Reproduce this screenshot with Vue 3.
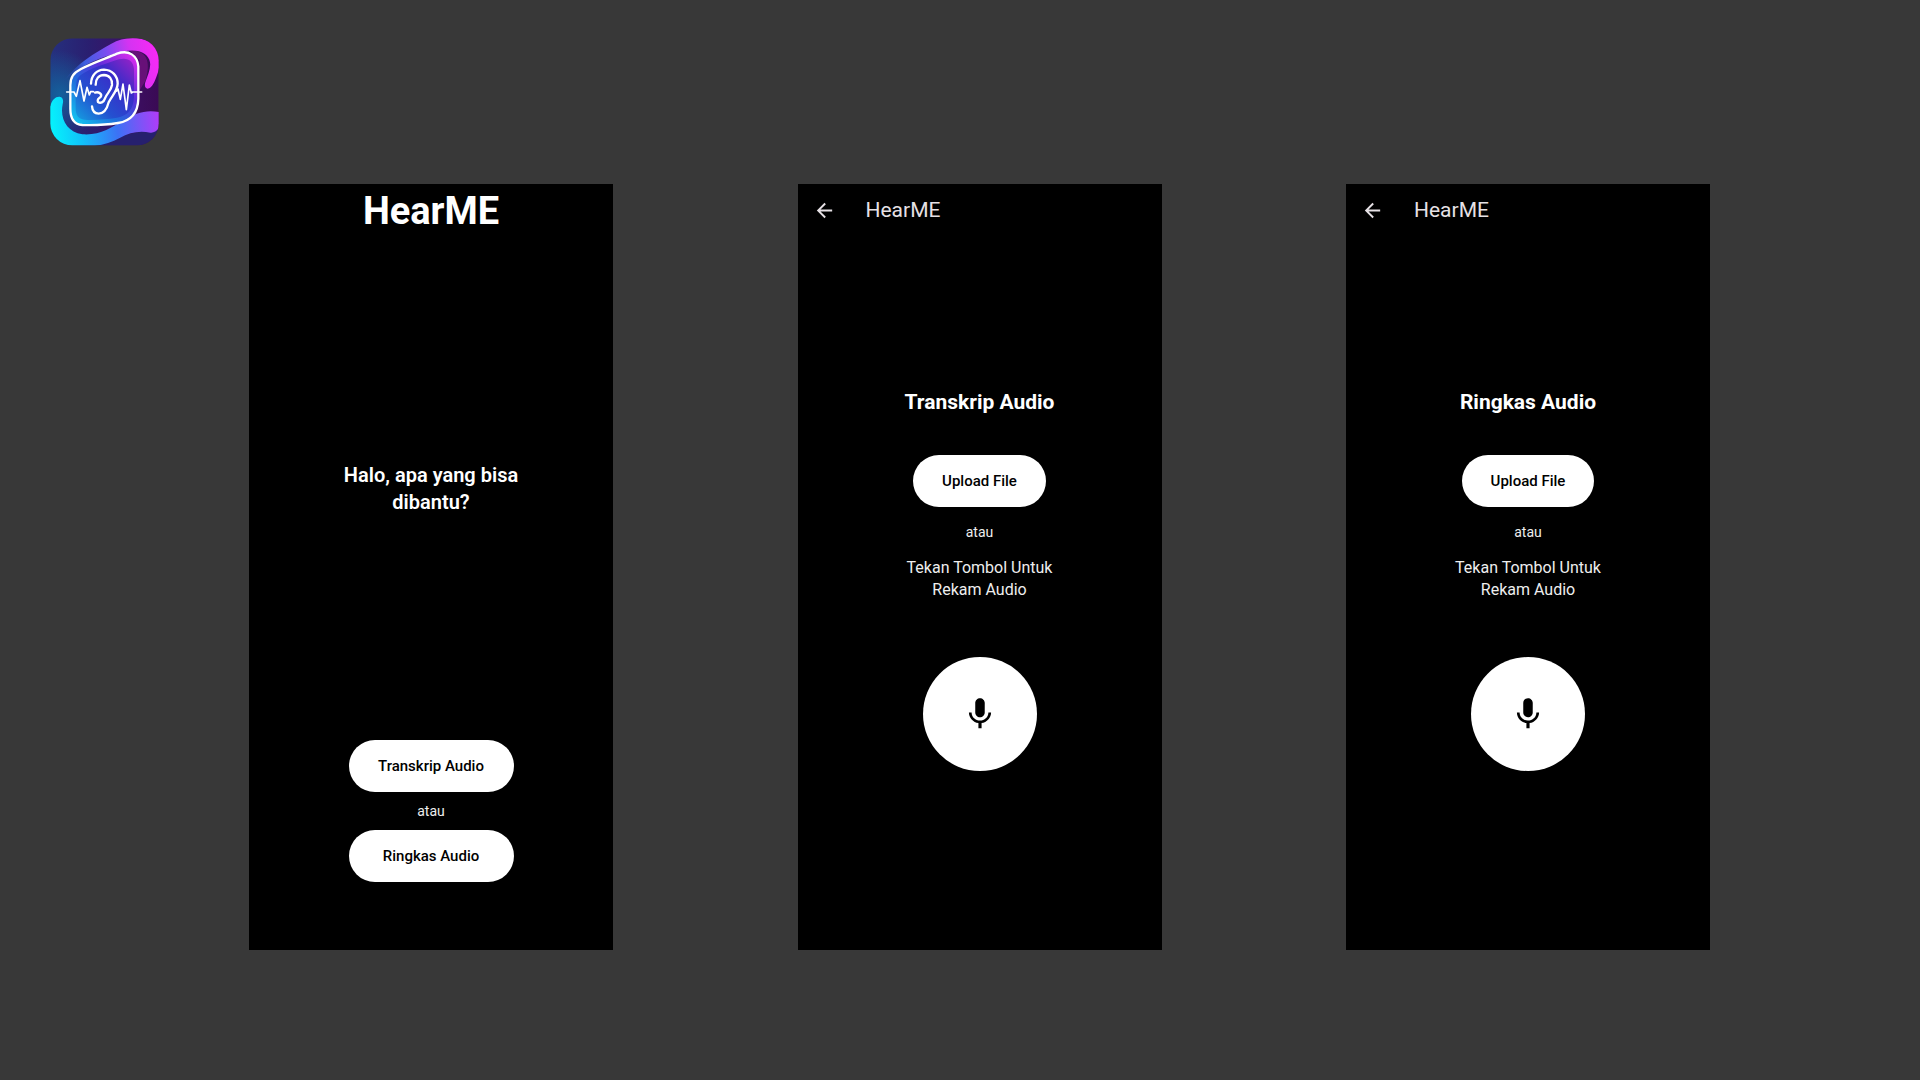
<script setup>
const recorders = [
  { id: 'transkrip', title: 'Transkrip Audio' },
  { id: 'ringkas', title: 'Ringkas Audio' },
]
</script>

<template>
  <div class="board">
    <header class="brand">
      <svg class="logo" viewBox="31 23 327 324" role="img" aria-label="HearME">
        <defs>
          <clipPath id="tile"><rect x="32" y="24" width="325" height="321" rx="66" /></clipPath>
          <linearGradient id="night" x1="0" y1="0.4" x2="1" y2="0.4">
            <stop offset="0" stop-color="#25307e" />
            <stop offset="0.35" stop-color="#2a1f70" />
            <stop offset="0.7" stop-color="#3c1066" />
            <stop offset="1" stop-color="#3a0a54" />
          </linearGradient>
          <radialGradient id="haze" cx="60" cy="190" r="130" gradientUnits="userSpaceOnUse">
            <stop offset="0" stop-color="#14609c" />
            <stop offset="1" stop-color="#14609c" stop-opacity="0" />
          </radialGradient>
          <linearGradient id="top" x1="75" y1="150" x2="350" y2="80" gradientUnits="userSpaceOnUse">
            <stop offset="0" stop-color="#2a4fc0" stop-opacity="0" />
            <stop offset="0.25" stop-color="#3d5fe0" />
            <stop offset="0.5" stop-color="#7a4cf0" />
            <stop offset="0.75" stop-color="#d433f2" />
            <stop offset="1" stop-color="#f52af5" />
          </linearGradient>
          <linearGradient id="bottom" x1="40" y1="300" x2="357" y2="260" gradientUnits="userSpaceOnUse">
            <stop offset="0" stop-color="#06f0fc" />
            <stop offset="0.25" stop-color="#10c4fa" />
            <stop offset="0.6" stop-color="#3c72f5" />
            <stop offset="1" stop-color="#b03cf8" />
          </linearGradient>
          <linearGradient id="glass" x1="95" y1="280" x2="290" y2="75" gradientUnits="userSpaceOnUse">
            <stop offset="0" stop-color="#12d0f4" />
            <stop offset="0.35" stop-color="#1f6fdc" />
            <stop offset="0.65" stop-color="#5a2fd8" />
            <stop offset="1" stop-color="#e42cf0" />
          </linearGradient>
          <linearGradient id="core" x1="105" y1="265" x2="280" y2="95" gradientUnits="userSpaceOnUse">
            <stop offset="0" stop-color="#149fe0" />
            <stop offset="0.35" stop-color="#2450d0" />
            <stop offset="0.7" stop-color="#3a2cc8" />
            <stop offset="1" stop-color="#9022c8" />
          </linearGradient>
        </defs>
        <g clip-path="url(#tile)">
          <rect x="32" y="24" width="325" height="322" fill="url(#night)" />
          <rect x="32" y="24" width="325" height="322" fill="url(#haze)" />
          <path d="M120 346L357 290V346Z" fill="#26206e" />
          <path d="M270 60C320 60 335 90 318 150L300 180V90Z" fill="#7a1284" opacity="0.7" />
          <path d="M72 152C115 96 165 68 215 40C250 20 300 15 340 40C366 70 362 110 350 140C344 157 337 170 328 174C318 178 313 168 317 156C325 132 337 108 329 88C318 62 285 56 250 64C190 76 125 102 72 152Z" fill="url(#top)" />
          <path d="M32 228C36 208 48 198 60 199C70 201 72 210 69 222C60 265 82 306 128 312C180 316 215 293 250 270C285 248 320 237 358 245V294C350 303 342 308 332 307C300 300 270 306 240 323C205 343 160 350 110 352H20V228Z" fill="url(#bottom)" />
          <path d="M92 180C91 148 99 132 124 116C160 96 200 84 232 70C268 57 293 76 296 108V205C295 245 276 271 235 278C205 283 165 285 128 284C102 282 92 264 92 235Z" fill="url(#glass)" />
          <path d="M108 185C108 148 113 138 134 127C170 108 205 98 238 87C265 80 281 92 283 116V200C281 236 266 256 232 262C200 267 165 270 135 268C115 265 108 254 108 232Z" fill="url(#core)" />
          <g fill="none" stroke="#fff" stroke-linecap="round" stroke-linejoin="round">
            <path stroke-width="7" d="M92 184V165C92 140 101 128 124 116C160 97 200 84 232 70C268 57 293 76 296 108V184M92 184V235C92 264 102 282 128 284C165 285 205 283 235 278C276 271 295 245 296 205V184" />
            <path stroke-width="5" d="M81 185H103L110 198L121 151L133 212L142 171L149 194L153 184H161" />
            <path stroke-width="5" d="M231 182L235 176L242 207L250 161L260 238L269 164L275 188L279 185H306" />
            <path stroke-width="7" d="M154 160C155 134 171 119 193 118C218 119 234 137 234 160C233 184 216 197 207 216C202 236 192 250 177 250C164 249 158 241 157 228" />
            <path stroke-width="7" d="M168 163C168 145 178 134 193 134C210 135 219 148 217 164C214 183 202 188 196 204C192 217 182 220 175 215" />
            <path stroke-width="7" d="M166 187C176 183 187 190 184 198C182 203 173 202 174 212" />
          </g>
        </g>
      </svg>
    </header>

    <main class="phones">
      <section class="phone">
        <h1 class="app-name">HearME</h1>
        <p class="greeting">Halo, apa yang bisa<br />dibantu?</p>
        <div class="choices">
          <button class="pill pill-wide" type="button">Transkrip Audio</button>
          <span class="or">atau</span>
          <button class="pill pill-wide" type="button">Ringkas Audio</button>
        </div>
      </section>

      <section v-for="screen in recorders" :key="screen.id" class="phone">
        <div class="app-bar">
          <button class="back" type="button" aria-label="Kembali">
            <svg viewBox="0 0 24 24" aria-hidden="true">
              <path fill="currentColor" d="M20 11H7.83l5.59-5.59L12 4l-8 8 8 8 1.41-1.41L7.83 13H20v-2z" />
            </svg>
          </button>
          <span class="bar-title">HearME</span>
        </div>
        <h2 class="heading">{{ screen.title }}</h2>
        <button class="pill" type="button">Upload File</button>
        <span class="or or-spaced">atau</span>
        <p class="hint">Tekan Tombol Untuk<br />Rekam Audio</p>
        <button class="mic" type="button" aria-label="Rekam audio">
          <svg viewBox="0 0 24 24" aria-hidden="true">
            <path d="M12 14c1.66 0 2.99-1.34 2.99-3L15 5c0-1.66-1.34-3-3-3S9 3.34 9 5v6c0 1.66 1.34 3 3 3zm5.3-3c0 3-2.54 5.1-5.3 5.1S6.7 14 6.7 11H5c0 3.41 2.72 6.23 6 6.72V21h2v-3.28c3.28-.48 6-3.3 6-6.72h-1.7z" />
          </svg>
        </button>
      </section>
    </main>
  </div>
</template>

<style>
body {
  margin: 0;
  background: #383838;
}
</style>

<style scoped>
.board {
  min-height: 100vh;
  box-sizing: border-box;
  padding-bottom: 130px;
  background: #383838;
  color: #fff;
  font-family: Roboto, "Liberation Sans", sans-serif;
}

.brand {
  padding: 38px 50px;
}

.logo {
  display: block;
  width: 109px;
  height: 108px;
}

.phones {
  display: flex;
  justify-content: space-between;
  padding: 0 210px 0 249px;
}

.phone {
  display: flex;
  flex-direction: column;
  align-items: center;
  box-sizing: border-box;
  width: 364px;
  min-height: 766px;
  background: #000;
}

.app-name {
  margin: 0;
  font-size: 38px;
  line-height: 54px;
  font-weight: 700;
}

.greeting {
  margin: 224px 0 0;
  font-size: 20px;
  line-height: 27px;
  font-weight: 600;
  text-align: center;
}

.choices {
  display: flex;
  flex-direction: column;
  align-items: center;
  margin: auto 0 68px;
}

.pill {
  height: 52px;
  padding: 0 29px;
  border: 0;
  border-radius: 26px;
  background: #fff;
  color: #000;
  font: 500 15px/20px Roboto, "Liberation Sans", sans-serif;
}

.pill-wide {
  min-width: 165px;
}

.or {
  padding: 10px 0;
  font-size: 14px;
  line-height: 18px;
  color: #eee;
}

.or-spaced {
  padding: 16px 0;
}

.app-bar {
  display: flex;
  align-items: center;
  align-self: stretch;
  height: 52px;
  padding-left: 15px;
  gap: 30px;
  color: #e6e1e5;
}

.back {
  display: flex;
  padding: 0;
  border: 0;
  background: none;
  color: inherit;
}

.back svg {
  width: 23px;
  height: 23px;
}

.bar-title {
  font-size: 21px;
  line-height: 28px;
}

.heading {
  margin: 152px 0 39px;
  font-size: 21px;
  line-height: 28px;
  font-weight: 700;
}

.hint {
  margin: 0;
  font-size: 16px;
  line-height: 22px;
  text-align: center;
  color: #eee;
}

.mic {
  display: flex;
  align-items: center;
  justify-content: center;
  width: 114px;
  height: 114px;
  margin-top: 56px;
  padding: 0;
  border: 0;
  border-radius: 50%;
  background: #fff;
  color: #000;
}

.mic svg {
  width: 38px;
  height: 38px;
}
</style>
